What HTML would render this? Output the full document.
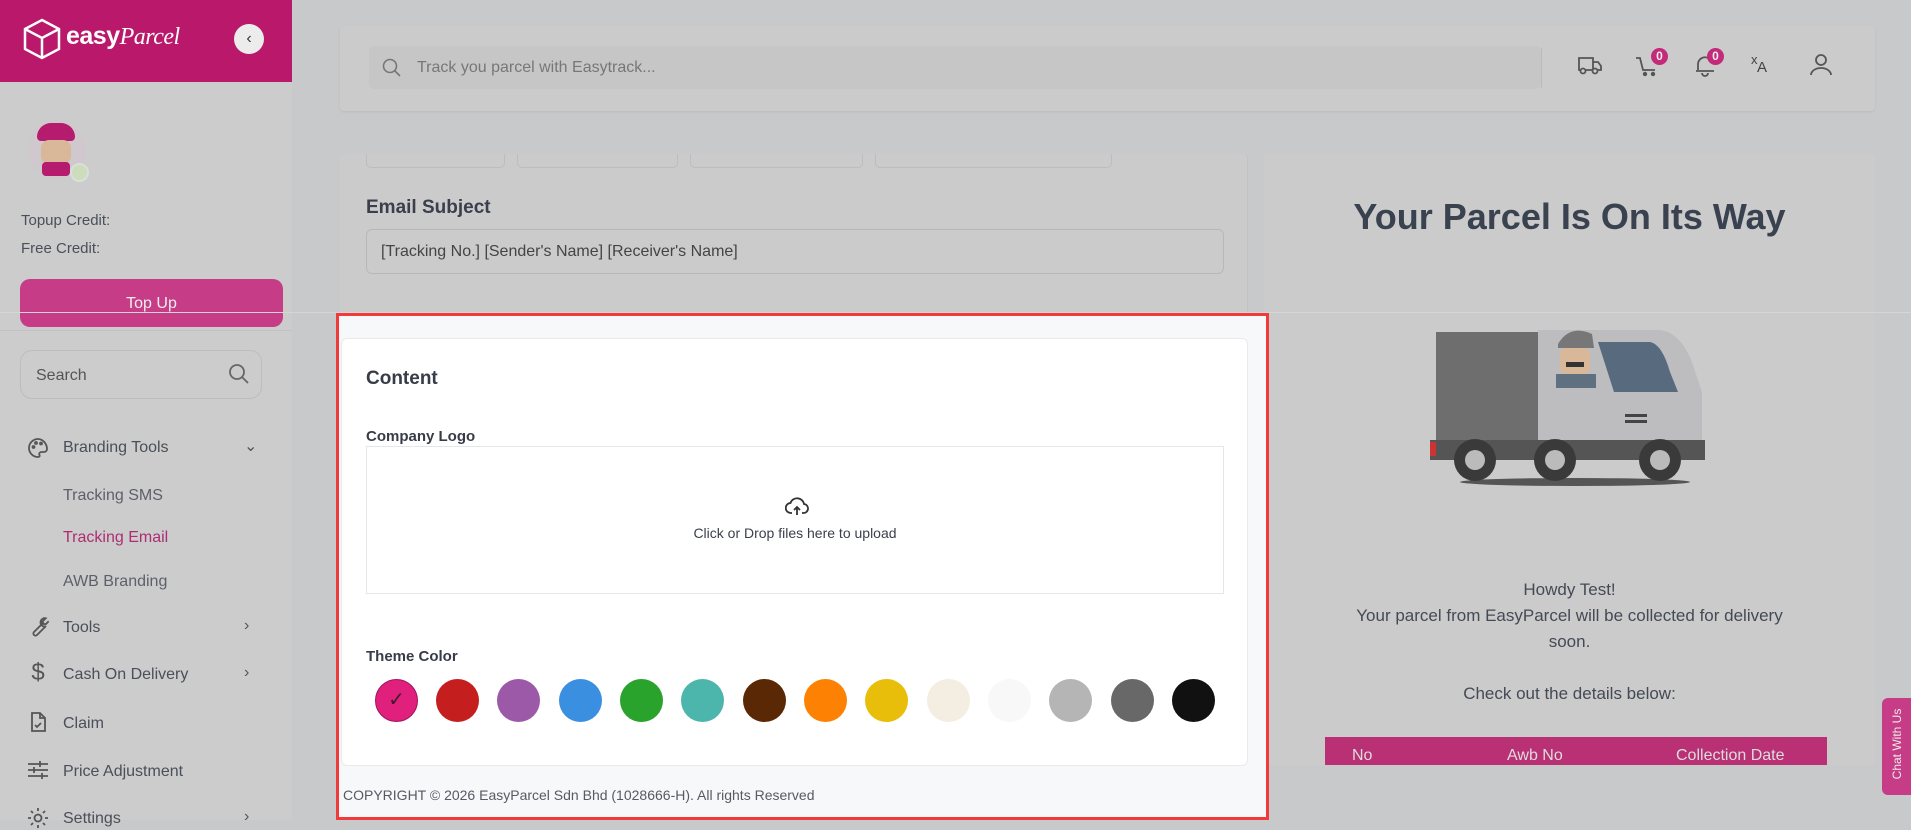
<!DOCTYPE html>
<html><head><meta charset="utf-8"><style>
*{margin:0;padding:0;box-sizing:border-box}
body{width:1911px;height:820px;overflow:hidden;background:#c8c9cb;font-family:"Liberation Sans",sans-serif;position:relative;color:#3d4350}
.a{position:absolute}
.side{left:0;top:0;width:292px;height:820px;background:#cccccd}
.hdr{left:0;top:0;width:292px;height:82px;background:#b9186b}
.menu{left:63px;font-size:16px;color:#4a4f58}
.ico{left:26px;width:24px;height:24px}
.chev{left:244px;font-size:16px;color:#555}
.card{background:#cbcbcc;border-radius:4px}
.sw{position:absolute;top:676px;width:43px;height:43px;border-radius:50%}
</style></head><body>
<div class="a side"></div>
<div class="a hdr"></div>
<svg class="a" style="left:22px;top:18px" width="40" height="42" viewBox="0 0 40 42" fill="none" stroke="#fff" stroke-width="2.5"><path d="M20 2 L37 11 L37 31 L20 40 L3 31 L3 11 Z M3 11 L20 20 L37 11 M20 20 L20 40"/></svg>
<div class="a" style="left:66px;top:22px;color:#fff;font-weight:bold;font-size:25px;letter-spacing:-0.5px">easy<span style="font-family:'Liberation Serif',serif;font-style:italic;font-weight:normal;font-size:24px">Parcel</span></div>
<div class="a" style="left:234px;top:24px;width:30px;height:30px;border-radius:50%;background:#ececec;color:#333;font-size:16px;text-align:center;line-height:29px">&#8249;</div>
<div class="a" style="left:28px;top:121px;width:58px;height:58px;border-radius:50%;background:#cfc8cc"></div>
<div class="a" style="left:37px;top:123px;width:38px;height:18px;border-radius:14px 14px 4px 4px;background:#b51c6e"></div>
<div class="a" style="left:41px;top:140px;width:30px;height:24px;border-radius:8px;background:#d8b898"></div>
<div class="a" style="left:42px;top:162px;width:28px;height:14px;background:#b51c6e;border-radius:4px"></div>
<div class="a" style="left:70px;top:163px;width:19px;height:19px;border-radius:50%;background:#cdb;border:2px solid #ddd"></div>
<div class="a" style="left:21px;top:212px;font-size:15px;color:#4a4f58">Topup Credit:</div>
<div class="a" style="left:21px;top:240px;font-size:15px;color:#4a4f58">Free Credit:</div>
<div class="a" style="left:20px;top:279px;width:263px;height:48px;border-radius:10px;background:#c63c86;color:#eee;font-size:16px;text-align:center;line-height:50px">Top Up</div>
<div class="a" style="left:0;top:330px;width:292px;height:1px;background:#c2c2c4"></div>
<div class="a" style="left:20px;top:350px;width:242px;height:49px;border-radius:12px;border:1px solid #bdbdbf;font-size:16px;color:#555;padding:16px 0 0 15px">Search</div>
<svg class="a" style="left:228px;top:363px" width="22" height="22" viewBox="0 0 22 22" fill="none" stroke="#666" stroke-width="1.8"><circle cx="9" cy="9" r="7"/><path d="M14 14 L20 20"/></svg>
<svg class="a ico" style="top:436px" viewBox="0 0 24 24" fill="none" stroke="#555" stroke-width="1.8"><path d="M12 3a9 9 0 0 0 0 18c1.5 0 2-1 1.5-2-.8-1.5.2-3 2-3H18a3 3 0 0 0 3-3c0-5-4-10-9-10z"/><circle cx="7.5" cy="11" r="1"/><circle cx="10" cy="7" r="1"/><circle cx="15" cy="7.5" r="1"/></svg>
<div class="a menu" style="top:439px">Branding Tools</div><div class="a chev" style="top:436px">&#8964;</div>
<div class="a menu" style="top:487px;color:#5d6068">Tracking SMS</div>
<div class="a menu" style="top:529px;color:#ad2d72">Tracking Email</div>
<div class="a menu" style="top:573px;color:#5d6068">AWB Branding</div>
<svg class="a ico" style="top:615px" viewBox="0 0 24 24" fill="none" stroke="#555" stroke-width="1.8"><path d="M14.7 6.3a4 4 0 0 0 5 5L20 11l-9 9a2.1 2.1 0 0 1-3-3l9-9z M14.7 6.3a4 4 0 0 1 5-3l-3 3 .5 2.5 2.5.5 3-3"/></svg>
<div class="a menu" style="top:619px">Tools</div><div class="a chev" style="top:617px">&#8250;</div>
<div class="a ico" style="top:661px;font-size:24px;color:#555;text-align:center;line-height:24px">$</div>
<div class="a menu" style="top:666px">Cash On Delivery</div><div class="a chev" style="top:664px">&#8250;</div>
<svg class="a ico" style="top:710px" viewBox="0 0 24 24" fill="none" stroke="#555" stroke-width="1.8"><path d="M6 3h8l5 5v13H6z M14 3v5h5 M9 15l2 2 4-4"/></svg>
<div class="a menu" style="top:715px">Claim</div>
<svg class="a ico" style="top:758px" viewBox="0 0 24 24" fill="none" stroke="#555" stroke-width="1.8"><path d="M2 6h20 M2 12h20 M2 18h20 M14 3v6 M8 9v6 M16 15v6"/></svg>
<div class="a menu" style="top:763px">Price Adjustment</div>
<svg class="a ico" style="top:806px" viewBox="0 0 24 24" fill="none" stroke="#555" stroke-width="1.8"><circle cx="12" cy="12" r="3.5"/><path d="M12 2v3 M12 19v3 M2 12h3 M19 12h3 M5 5l2 2 M17 17l2 2 M5 19l2-2 M17 7l2-2"/></svg>
<div class="a menu" style="top:810px">Settings</div><div class="a chev" style="top:808px">&#8250;</div>

<!-- top bar -->
<div class="a card" style="left:340px;top:26px;width:1535px;height:85px;box-shadow:0 1px 2px #bbb"></div>
<div class="a" style="left:369px;top:46px;width:1172px;height:43px;background:#c6c6c7;border-radius:6px"></div>
<svg class="a" style="left:382px;top:58px" width="20" height="20" viewBox="0 0 20 20" fill="none" stroke="#777" stroke-width="1.6"><circle cx="8" cy="8" r="6.5"/><path d="M13 13 L18 18"/></svg>
<div class="a" style="left:417px;top:59px;font-size:16px;color:#777">Track you parcel with Easytrack...</div>
<div class="a" style="left:1541px;top:48px;width:1px;height:40px;background:#bbb"></div>
<svg class="a" style="left:1577px;top:54px" width="26" height="24" viewBox="0 0 26 24" fill="none" stroke="#555" stroke-width="1.8"><path d="M2 4h14v12H2z M16 8h5l3 4v4h-8"/><circle cx="6" cy="17" r="2.5" fill="#ccc"/><circle cx="18" cy="17" r="2.5" fill="#ccc"/></svg>
<svg class="a" style="left:1635px;top:54px" width="26" height="24" viewBox="0 0 26 24" fill="none" stroke="#555" stroke-width="1.8"><path d="M1 4h4l3 12h12"/><circle cx="10" cy="20" r="1.3" fill="#555"/><circle cx="18" cy="20" r="1.3" fill="#555"/></svg>
<div class="a" style="left:1651px;top:48px;width:17px;height:17px;border-radius:50%;background:#c32b7a;color:#eee;font-size:12px;font-weight:bold;text-align:center;line-height:17px">0</div>
<svg class="a" style="left:1692px;top:52px" width="26" height="26" viewBox="0 0 26 26" fill="none" stroke="#555" stroke-width="1.8"><path d="M6 18V12a7 7 0 0 1 10-6 M4 19h18 M10 21a3 3 0 0 0 6 0"/></svg>
<div class="a" style="left:1707px;top:48px;width:17px;height:17px;border-radius:50%;background:#c32b7a;color:#eee;font-size:12px;font-weight:bold;text-align:center;line-height:17px">0</div>
<div class="a" style="left:1751px;top:52px;font-size:13px;color:#444">x</div>
<div class="a" style="left:1757px;top:59px;font-size:15px;color:#444">A</div>
<svg class="a" style="left:1808px;top:52px" width="26" height="26" viewBox="0 0 26 26" fill="none" stroke="#555" stroke-width="1.8"><circle cx="13" cy="8" r="5"/><path d="M3 23a10 7 0 0 1 20 0"/></svg>

<!-- left form card -->
<div class="a card" style="left:340px;top:154px;width:908px;height:611px;border-right:1px solid #c2c2c4"></div>
<div class="a" style="left:366px;top:148px;width:139px;height:20px;border:1px solid #bdbdbf;border-radius:5px"></div>
<div class="a" style="left:517px;top:148px;width:161px;height:20px;border:1px solid #bdbdbf;border-radius:5px"></div>
<div class="a" style="left:690px;top:148px;width:173px;height:20px;border:1px solid #bdbdbf;border-radius:5px"></div>
<div class="a" style="left:875px;top:148px;width:237px;height:20px;border:1px solid #bdbdbf;border-radius:5px"></div>
<div class="a" style="left:340px;top:126px;width:910px;height:28px;background:#c8c9cb"></div>
<div class="a" style="left:366px;top:197px;font-size:19px;font-weight:bold;color:#3a3f4b">Email Subject</div>
<div class="a" style="left:366px;top:229px;width:858px;height:45px;border:1px solid #b8b8ba;border-radius:6px;font-size:16px;color:#444;padding:13px 0 0 14px">[Tracking No.] [Sender's Name] [Receiver's Name]</div>

<!-- right preview card -->
<div class="a card" style="left:1264px;top:154px;width:611px;height:611px"></div>
<div class="a" style="left:1264px;top:196px;width:611px;text-align:center;font-size:36px;font-weight:bold;color:#3a4250">Your Parcel Is On Its Way</div>
<svg class="a" style="left:1430px;top:322px" width="295" height="172" viewBox="0 0 295 172">
<ellipse cx="145" cy="160" rx="115" ry="4" fill="#555"/>
<rect x="6" y="10" width="102" height="110" fill="#6e6e6e"/>
<path d="M108 8 H230 Q250 10 262 40 L272 70 V120 H108 Z" fill="#bdbdbf"/>
<path d="M168 20 H220 Q232 22 240 50 L248 70 H184 Z" fill="#576a7e"/>
<rect x="0" y="118" width="275" height="20" fill="#555"/>
<rect x="0" y="120" width="6" height="14" fill="#c33"/>
<circle cx="45" cy="138" r="21" fill="#3a3a3a"/><circle cx="45" cy="138" r="10" fill="#bbb"/>
<circle cx="125" cy="138" r="21" fill="#3a3a3a"/><circle cx="125" cy="138" r="10" fill="#bbb"/>
<circle cx="230" cy="138" r="21" fill="#3a3a3a"/><circle cx="230" cy="138" r="10" fill="#bbb"/>
<rect x="195" y="92" width="22" height="3" fill="#444"/><rect x="195" y="98" width="22" height="3" fill="#444"/>
<path d="M128 22 Q140 2 162 12 L164 26 H128 Z" fill="#777"/>
<rect x="130" y="26" width="30" height="26" rx="6" fill="#d8b898"/>
<rect x="136" y="40" width="18" height="5" fill="#333"/>
<rect x="126" y="52" width="40" height="14" fill="#5f7080"/>
</svg>
<div class="a" style="left:1264px;top:577px;width:611px;text-align:center;font-size:17px;line-height:26px;color:#444a54">Howdy Test!<br>Your parcel from EasyParcel will be collected for delivery<br>soon.<br><br>Check out the details below:</div>
<div class="a" style="left:1325px;top:737px;width:502px;height:28px;background:#b93174;color:#ddd;font-size:16px">
<span class="a" style="left:27px;top:10px">No</span><span class="a" style="left:182px;top:10px">Awb No</span><span class="a" style="left:351px;top:10px">Collection Date</span></div>
<div class="a" style="left:292px;top:765px;width:1619px;height:55px;background:#c8c9cb"></div>
<div class="a" style="left:0;top:312px;width:1911px;height:1px;background:#d6d6d8"></div>

<div class="a" style="left:1882px;top:698px;width:29px;height:97px;background:#c63c86;border-radius:6px 0 0 6px"></div>
<div class="a" style="left:1852px;top:737px;width:90px;transform:rotate(-90deg);color:#eee;font-size:12px;text-align:center">Chat With Us</div>

<!-- highlighted -->
<div class="a" style="left:336px;top:313px;width:933px;height:507px;border:3px solid #f23a3a;background:#f7f8fa">
 <div class="a" style="left:2px;top:22px;width:907px;height:428px;background:#fff;border:1px solid #e8eaee;border-radius:6px"></div>
 <div class="a" style="left:27px;top:52px;font-size:19px;font-weight:bold;color:#373c48">Content</div>
 <div class="a" style="left:27px;top:112px;font-size:15px;font-weight:bold;color:#373c48">Company Logo</div>
 <div class="a" style="left:27px;top:130px;width:858px;height:148px;border:1px solid #e3e6ea"></div>
 <svg class="a" style="left:446px;top:180px" width="24" height="22" viewBox="0 0 24 22" fill="none" stroke="#333" stroke-width="1.8"><path d="M7 17H6a5 5 0 0 1-.5-10A7 7 0 0 1 19 8a4.5 4.5 0 0 1-1 9h-1 M12 19v-8 M9 14l3-3 3 3"/></svg>
 <div class="a" style="left:27px;top:209px;width:858px;text-align:center;font-size:14px;color:#3a3f4b">Click or Drop files here to upload</div>
 <div class="a" style="left:27px;top:332px;font-size:15px;font-weight:bold;color:#373c48">Theme Color</div>
 <div style="position:absolute;left:0;top:-313px;width:0;height:0">
 <div class="sw" style="left:36px;background:#e0207c;border:1px solid #a0145a;color:#3a1c2a;text-align:center;line-height:40px;font-size:20px">&#10003;</div>
 <div class="sw" style="left:97px;background:#c41e1e"></div>
 <div class="sw" style="left:158px;background:#9b59a8"></div>
 <div class="sw" style="left:220px;background:#3b8fe0"></div>
 <div class="sw" style="left:281px;background:#29a32c"></div>
 <div class="sw" style="left:342px;background:#4db6ac"></div>
 <div class="sw" style="left:404px;background:#5a2805"></div>
 <div class="sw" style="left:465px;background:#fd8204"></div>
 <div class="sw" style="left:526px;background:#e8be0a"></div>
 <div class="sw" style="left:588px;background:#f4ede2"></div>
 <div class="sw" style="left:649px;background:#f8f8f8"></div>
 <div class="sw" style="left:710px;background:#b5b5b5"></div>
 <div class="sw" style="left:772px;background:#686868"></div>
 <div class="sw" style="left:833px;background:#111"></div>
 </div>
 <div class="a" style="left:4px;top:471px;font-size:14px;color:#555a64">COPYRIGHT © 2026 EasyParcel Sdn Bhd (1028666-H). All rights Reserved</div>
</div>
</body></html>
